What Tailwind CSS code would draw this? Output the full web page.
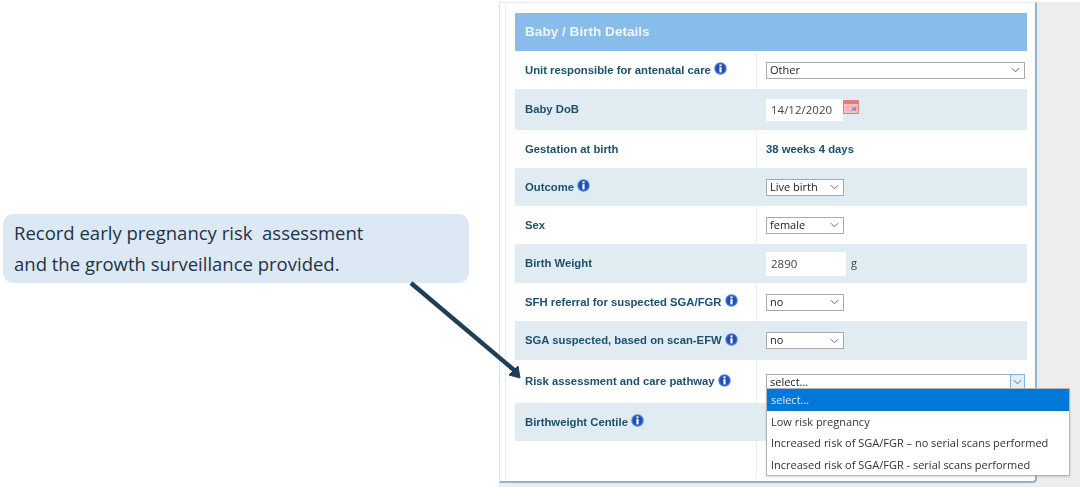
<!DOCTYPE html>
<html lang="en">
<head>
  <meta charset="UTF-8">
  <meta name="viewport" content="width=device-width, initial-scale=1.0">
  <title>Baby / Birth Details</title>
  <script src="https://cdn.jsdelivr.net/npm/@tailwindcss/browser@4"></script>
</head>
<body class="bg-white">
  <svg class="hidden">
    <symbol id="info" viewBox="0 0 13 13">
      <circle cx="6.5" cy="6.5" r="6.2" fill="#4f7fd6"/>
      <circle cx="6.5" cy="6.5" r="5" fill="#1f4fb0"/>
      <rect x="5.4" y="2.4" width="2.2" height="1.9" fill="#fff"/>
      <rect x="5.4" y="5.2" width="2.2" height="5.2" fill="#fff"/>
    </symbol>
    <symbol id="chev" viewBox="0 0 10 6">
      <path d="M1 1l4 4 4-4" fill="none" stroke="#666" stroke-width="1.1"/>
    </symbol>
  </svg>

  <div class="relative flex w-[1080px] h-[487px] overflow-hidden font-['Liberation_Sans',sans-serif]">
    <!-- callout column -->
    <div class="w-[499px] shrink-0 pl-[3px] pt-[214px]">
      <div class="w-[466px] h-[69px] rounded-[10px] bg-[#dce8f4] pl-[11px] pt-[3px] font-['Open_Sans',sans-serif] text-[18.5px] leading-[31px] text-[#1f3347] whitespace-pre">Record early pregnancy risk  assessment
and the growth surveillance provided.</div>
    </div>

    <!-- form panel and gutter share the grey page background -->
    <div class="flex-1 mt-[2px] bg-[#ededed]">
      <div class="w-[538px] h-[481px] bg-white border-l border-r-2 border-b-2 border-t border-l-[#d5e3ee] border-r-[#8fb4d2] border-b-[#8fb4d2] border-t-[#e4edf3] rounded-br-[4px] pl-[5px] blur-[0.3px]">
        <div class="h-full border-l border-[#e6eff4] pl-[9px] pt-[10px]">
          <div class="w-[512px] text-[11.3px] font-bold text-[#1d5070]">
            <div class="h-[38px] bg-[#88bceb] flex items-center pl-[10px] text-[13.6px] text-[#eef6fd]">Baby / Birth Details</div>

            <div class="flex h-[38px] items-center">
              <div class="w-[242px] h-full pl-[10px] flex items-center gap-[3px] border-r border-[#e6eff4]">Unit responsible for antenatal care <svg class="w-[13px] h-[13px] -mt-[3px]"><use href="#info"/></svg></div>
              <div class="pl-[9px]">
                <div class="w-[259px] h-[17px] bg-white border border-[#a9a9a9] flex items-center justify-between pl-[3px] pr-[4px] font-['Open_Sans',sans-serif] font-normal text-[11px] text-[#222]">Other <svg class="w-[9px] h-[6px]"><use href="#chev"/></svg></div>
              </div>
            </div>

            <div class="flex h-[41px] items-center bg-[#e0ecf2]">
              <div class="w-[241px] h-full pl-[10px] flex items-center">Baby DoB</div>
              <div class="pl-[10px] flex items-start">
                <div class="w-[77px] h-[22px] bg-white pl-[5px] flex items-center font-['Open_Sans',sans-serif] font-normal text-[11.5px] text-[#444]">14/12/2020</div>
                <svg class="w-[16px] h-[14px] mt-[1px]" viewBox="0 0 16 14">
                  <rect width="16" height="14" rx="1" fill="#e27d7d"/>
                  <rect x="1" y="4" width="14" height="9" fill="#f7c6c6"/>
                  <path d="M1 7h14M1 10h14M5 4v9M9 4v9M13 4v9" stroke="#e99" stroke-width=".7"/>
                  <rect x="9.5" y="7.5" width="3.5" height="3" fill="#6f8fdc"/>
                </svg>
              </div>
            </div>

            <div class="flex h-[38px] items-center">
              <div class="w-[242px] h-full pl-[10px] flex items-center border-r border-[#e6eff4]">Gestation at birth</div>
              <div class="pl-[9px]">38 weeks 4 days</div>
            </div>

            <div class="flex h-[38px] items-center bg-[#e0ecf2]">
              <div class="w-[241px] h-full pl-[10px] flex items-center gap-[3px]">Outcome <svg class="w-[13px] h-[13px] -mt-[3px]"><use href="#info"/></svg></div>
              <div class="pl-[10px]">
                <div class="w-[78px] h-[17px] bg-white border border-[#a9a9a9] flex items-center justify-between pl-[3px] pr-[4px] font-['Open_Sans',sans-serif] font-normal text-[11px] text-[#222]">Live birth <svg class="w-[9px] h-[6px]"><use href="#chev"/></svg></div>
              </div>
            </div>

            <div class="flex h-[38px] items-center">
              <div class="w-[242px] h-full pl-[10px] flex items-center border-r border-[#e6eff4]">Sex</div>
              <div class="pl-[9px]">
                <div class="w-[78px] h-[17px] bg-white border border-[#a9a9a9] flex items-center justify-between pl-[3px] pr-[4px] font-['Open_Sans',sans-serif] font-normal text-[11px] text-[#222]">female <svg class="w-[9px] h-[6px]"><use href="#chev"/></svg></div>
              </div>
            </div>

            <div class="flex h-[39px] items-center bg-[#e0ecf2]">
              <div class="w-[241px] h-full pl-[10px] flex items-center">Birth Weight</div>
              <div class="pl-[10px] flex items-center">
                <div class="w-[80px] h-[24px] bg-white pl-[5px] flex items-center font-['Open_Sans',sans-serif] font-normal text-[11.5px] text-[#444]">2890</div>
                <span class="ml-[5px] font-['Open_Sans',sans-serif] font-normal text-[11px] text-[#444]">g</span>
              </div>
            </div>

            <div class="flex h-[38px] items-center">
              <div class="w-[242px] h-full pl-[10px] flex items-center gap-[3px] border-r border-[#e6eff4]">SFH referral for suspected SGA/FGR <svg class="w-[13px] h-[13px] -mt-[3px]"><use href="#info"/></svg></div>
              <div class="pl-[9px]">
                <div class="w-[78px] h-[17px] bg-white border border-[#a9a9a9] flex items-center justify-between pl-[3px] pr-[4px] font-['Open_Sans',sans-serif] font-normal text-[11px] text-[#222]">no <svg class="w-[9px] h-[6px]"><use href="#chev"/></svg></div>
              </div>
            </div>

            <div class="flex h-[39px] items-center bg-[#e0ecf2]">
              <div class="w-[241px] h-full pl-[10px] flex items-center gap-[3px]">SGA suspected, based on scan-EFW <svg class="w-[13px] h-[13px] -mt-[3px]"><use href="#info"/></svg></div>
              <div class="pl-[10px]">
                <div class="w-[78px] h-[17px] bg-white border border-[#a9a9a9] flex items-center justify-between pl-[3px] pr-[4px] font-['Open_Sans',sans-serif] font-normal text-[11px] text-[#222]">no <svg class="w-[9px] h-[6px]"><use href="#chev"/></svg></div>
              </div>
            </div>

            <div class="flex h-[43px] items-center">
              <div class="w-[242px] h-full pl-[10px] flex items-center gap-[3px] border-r border-[#e6eff4]">Risk assessment and care pathway <svg class="w-[13px] h-[13px] -mt-[3px]"><use href="#info"/></svg></div>
              <div class="pl-[9px] pt-[1px]">
                <div class="w-[259px] h-[17px] bg-white border border-[#a9a9a9] flex items-center justify-between pl-[3px] font-['Open_Sans',sans-serif] font-normal text-[11px] text-[#222]">select... <span class="w-[15px] h-[17px] -mr-px bg-[#e2effa] border border-[#7eb4ea] flex items-center justify-center"><svg class="w-[9px] h-[6px]"><use href="#chev"/></svg></span></div>
              </div>
            </div>

            <div class="flex h-[38px] items-center bg-[#e0ecf2]">
              <div class="w-[241px] h-full pl-[10px] flex items-center gap-[3px]">Birthweight Centile <svg class="w-[13px] h-[13px] -mt-[3px]"><use href="#info"/></svg></div>
            </div>

            <div class="h-[37px] w-[242px] border-r border-[#e6eff4]"></div>
          </div>
        </div>
      </div>
    </div>

    <!-- dropdown list, open over the form -->
    <div class="absolute left-[766px] top-[388px] w-[304px] h-[88px] bg-white border border-[#b5b5b5] font-['Open_Sans',sans-serif] text-[11px] text-[#333] shadow-[0_1px_2px_rgba(0,0,0,0.15)] blur-[0.3px]">
      <div class="h-[22px] bg-[#0078d7] text-[#dcebf8] pl-[4px] flex items-center">select...</div>
      <div class="h-[22px] pl-[4px] flex items-center">Low risk pregnancy</div>
      <div class="h-[21px] pl-[4px] flex items-center">Increased risk of SGA/FGR – no serial scans performed</div>
      <div class="h-[21px] pl-[4px] pt-px flex items-center">Increased risk of SGA/FGR - serial scans performed</div>
    </div>

    <!-- arrow from callout to the risk row -->
    <svg class="absolute left-[405px] top-[278px]" width="120" height="105" viewBox="0 0 120 105">
      <path d="M6 5L109 92" stroke="#1f3f57" stroke-width="4.5"/>
      <path d="M115 100L104 97L113 88Z" stroke="#1f3f57" stroke-width="1" fill="#1f3f57"/>
    </svg>
  </div>
</body>
</html>
